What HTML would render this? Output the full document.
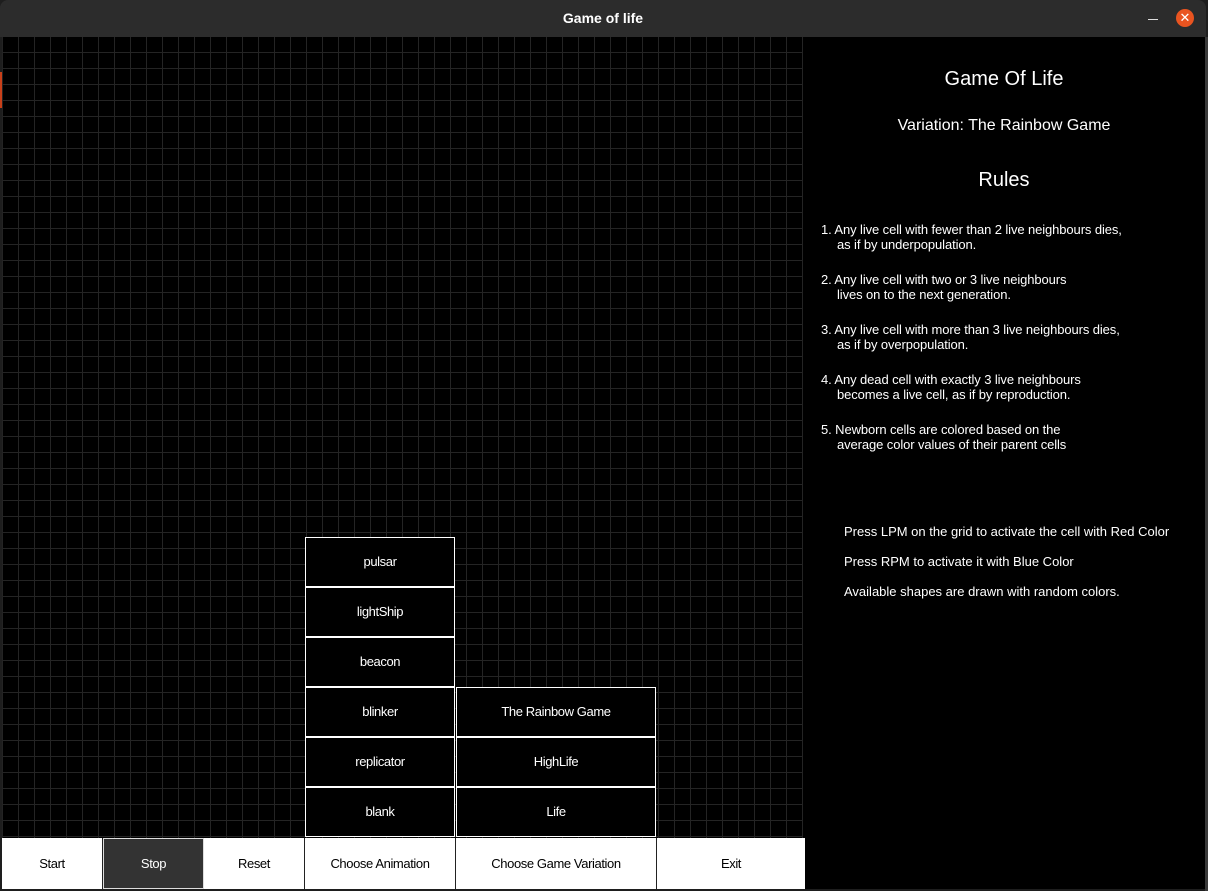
<!DOCTYPE html>
<html><head><meta charset="utf-8"><style>
*{margin:0;padding:0;box-sizing:border-box}
body{width:1208px;height:891px;background:#1e1e1e;position:relative;overflow:hidden;font-family:"Liberation Sans",sans-serif;}
#title{position:absolute;left:0;top:0;width:1206px;height:37px;background:#2c2c2c;border-radius:8px 8px 0 0;color:#fff;font-weight:bold;font-size:14px;text-align:center;line-height:37px;}
#close{position:absolute;left:1176px;top:9px;width:18px;height:18px;border-radius:50%;background:#e95420;color:#fff;font-size:13px;line-height:18px;text-align:center;font-weight:normal}
#min{position:absolute;left:1148px;top:19px;width:10px;height:1px;background:#ddd}
#grid{position:absolute;left:2px;top:37px;width:801px;height:801px;background-color:#000;
background-image:linear-gradient(to right,#242424 1px,transparent 1px),linear-gradient(to bottom,#242424 1px,transparent 1px);
background-size:16px 16px;background-position:0 -1px;}
#panel{position:absolute;left:803px;top:37px;width:402px;height:852px;background:#000;color:#fff}
.c{position:absolute;width:402px;text-align:center}
.r{position:absolute;left:18px;font-size:13px;line-height:15px;letter-spacing:-0.1px}
.r span{display:block;padding-left:16px}
.p{position:absolute;left:41px;font-size:13px;letter-spacing:0}
.btn{position:absolute;height:50px;border:1px solid #fff;background:#000;color:#fff;font-size:13px;letter-spacing:-0.4px;text-align:center;line-height:47px}
.bb{position:absolute;top:838px;height:51px;background:#fff;color:#000;font-size:13px;letter-spacing:-0.4px;text-align:center;line-height:51px;border-right:1px solid #222}
#red{position:absolute;left:0;top:72px;width:2px;height:36px;background:#c8401a}
#edge{position:absolute;left:1205px;top:37px;width:3px;height:854px;background:#3a3a3a}
</style></head><body>
<div id="title">Game of life<div id="min"></div><div id="close">✕</div></div>
<div id="grid"></div>
<div id="red"></div>
<div id="panel">
<div class="c" style="top:31px;font-size:20px">Game Of Life</div>
<div class="c" style="top:80px;font-size:16px">Variation: The Rainbow Game</div>
<div class="c" style="top:132px;font-size:20px">Rules</div>
<div class="r" style="top:185px">1. Any live cell with fewer than 2 live neighbours dies,<span>as if by underpopulation.</span></div>
<div class="r" style="top:235px">2. Any live cell with two or 3 live neighbours<span>lives on to the next generation.</span></div>
<div class="r" style="top:285px">3. Any live cell with more than 3 live neighbours dies,<span>as if by overpopulation.</span></div>
<div class="r" style="top:335px">4. Any dead cell with exactly 3 live neighbours<span>becomes a live cell, as if by reproduction.</span></div>
<div class="r" style="top:385px">5. Newborn cells are colored based on the<span>average color values of their parent cells</span></div>
<div class="p" style="top:487px">Press LPM on the grid to activate the cell with Red Color</div>
<div class="p" style="top:517px">Press RPM to activate it with Blue Color</div>
<div class="p" style="top:547px">Available shapes are drawn with random colors.</div>
</div>
<div id="edge"></div>
<div class="btn" style="left:305px;top:537px;width:150px">pulsar</div>
<div class="btn" style="left:305px;top:587px;width:150px">lightShip</div>
<div class="btn" style="left:305px;top:637px;width:150px">beacon</div>
<div class="btn" style="left:305px;top:687px;width:150px">blinker</div>
<div class="btn" style="left:305px;top:737px;width:150px">replicator</div>
<div class="btn" style="left:305px;top:787px;width:150px">blank</div>
<div class="btn" style="left:456px;top:687px;width:200px">The Rainbow Game</div>
<div class="btn" style="left:456px;top:737px;width:200px">HighLife</div>
<div class="btn" style="left:456px;top:787px;width:200px">Life</div>
<div class="bb" style="left:2px;width:101px">Start</div>
<div class="bb" style="left:103px;width:101px;background:#333;color:#fff;border:1px solid #ddd;line-height:49px">Stop</div>
<div class="bb" style="left:204px;width:101px">Reset</div>
<div class="bb" style="left:305px;width:151px">Choose Animation</div>
<div class="bb" style="left:456px;width:201px">Choose Game Variation</div>
<div class="bb" style="left:657px;width:148px;border-right:none">Exit</div>
</body></html>
